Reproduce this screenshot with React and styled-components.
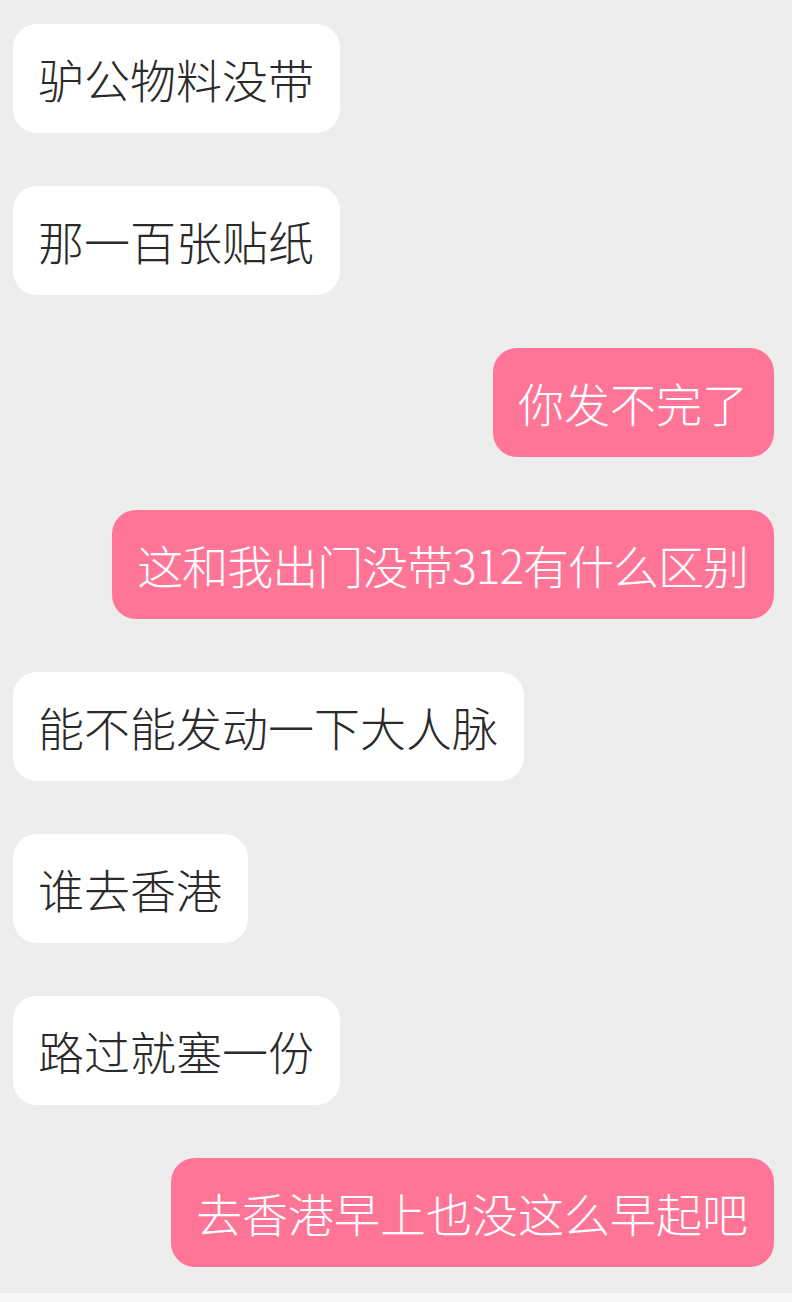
import styled, { createGlobalStyle } from 'styled-components'

const GlobalStyle = createGlobalStyle`
  html, body {
    margin: 0;
    padding: 0;
    background: #ededed;
  }
`

const Page = styled.div`
  width: 792px;
  min-height: 1302px;
  display: flex;
  flex-direction: column;
  background: #ededed;
  font-family: "Noto Sans CJK SC", "Noto Sans", sans-serif;
`

const Thread = styled.div`
  display: flex;
  flex-direction: column;
  gap: 53px;
  padding: 24px 18px 0 13px;
`

const Row = styled.div`
  display: flex;
  justify-content: ${p => (p.mine ? 'flex-end' : 'flex-start')};
`

const Bubble = styled.div`
  box-sizing: border-box;
  height: 109px;
  padding: 30px 26px 30px 25px;
  border-radius: 24px;
  font-size: 46px;
  line-height: 49px;
  font-weight: 300;
  white-space: nowrap;
  letter-spacing: ${p => (p.tight ? '-1px' : '0')};
  background: ${p => (p.mine ? '#ff7598' : '#ffffff')};
  color: ${p => (p.mine ? '#ffffff' : '#2a2a2a')};
`

const Footer = styled.div`
  margin-top: 26px;
  height: 9px;
  background: #f6f6f6;
`

const messages = [
  { text: '驴公物料没带' },
  { text: '那一百张贴纸' },
  { text: '你发不完了', mine: true },
  { text: '这和我出门没带312有什么区别', mine: true, tight: true },
  { text: '能不能发动一下大人脉' },
  { text: '谁去香港' },
  { text: '路过就塞一份' },
  { text: '去香港早上也没这么早起吧', mine: true },
]

export default function App() {
  return (
    <Page>
      <GlobalStyle />
      <Thread>
        {messages.map((m, i) => (
          <Row key={i} mine={m.mine}>
            <Bubble mine={m.mine} tight={m.tight}>{m.text}</Bubble>
          </Row>
        ))}
      </Thread>
      <Footer />
    </Page>
  )
}
